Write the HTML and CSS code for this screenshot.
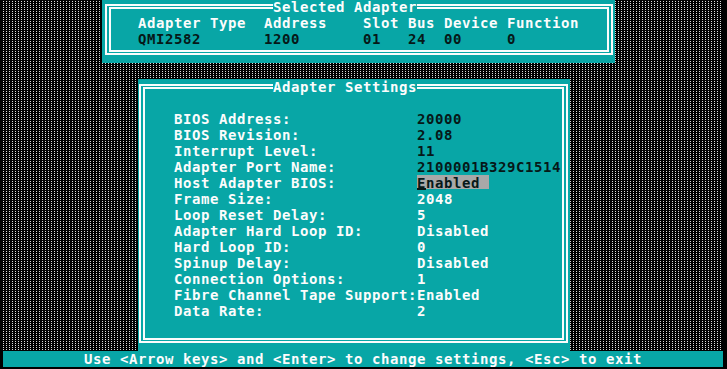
FILE: index.html
```html
<!DOCTYPE html>
<html lang='en-US'>
	<head>
		<title>Fast!UTIL - Adapter Settings</title>
		<meta charset='utf-8'>
		<link rel="stylesheet" href="styles.css">
	</head>
	<body>
		<main class='screen'>
			<section class='box selected'>
				<fieldset>
					<legend>Selected Adapter</legend>
					<div class='adapter'>
						<span>Adapter Type</span><span>Address</span><span>Slot</span><span>Bus</span><span>Device</span><span>Function</span>
						<span class='ro'>QMI2582</span><span class='ro'>1200</span><span class='ro'>01</span><span class='ro'>24</span><span class='ro'>00</span><span class='ro'>0</span>
					</div>
				</fieldset>
			</section>
			<section class='box settings'>
				<fieldset>
					<legend>Adapter Settings</legend>
					<dl>
						<dt>BIOS Address:</dt><dd class='ro'>20000</dd>
						<dt>BIOS Revision:</dt><dd class='ro'>2.08</dd>
						<dt>Interrupt Level:</dt><dd class='ro'>11</dd>
						<dt>Adapter Port Name:</dt><dd class='ro'>2100001B329C1514</dd>
						<dt>Host Adapter BIOS:</dt><dd><span class='current'><span class='cursor'>E</span>nabled</span></dd>
						<dt>Frame Size:</dt><dd>2048</dd>
						<dt>Loop Reset Delay:</dt><dd>5</dd>
						<dt>Adapter Hard Loop ID:</dt><dd>Disabled</dd>
						<dt>Hard Loop ID:</dt><dd>0</dd>
						<dt>Spinup Delay:</dt><dd>Disabled</dd>
						<dt>Connection Options:</dt><dd>1</dd>
						<dt>Fibre Channel Tape Support:</dt><dd>Enabled</dd>
						<dt>Data Rate:</dt><dd>2</dd>
					</dl>
				</fieldset>
			</section>
			<footer class='status'>Use &lt;Arrow keys&gt; and &lt;Enter&gt; to change settings, &lt;Esc&gt; to exit</footer>
		</main>
	</body>
</html>
```
FILE: styles.css
```css
html,body{
	margin:0;
	background:#000;
}

*{
	box-sizing:border-box;
}

/* 80 columns of 9px, rows of 16px */
.screen{
	display:block;
	width:720px;
	margin:-1.5px 0 0 3px;
	font-family:'DejaVu Sans Mono',monospace;
	font-weight:bold;
	font-size:14px;
	letter-spacing:.57px;
	line-height:16px;
	color:#fcfcfc;
	background-color:#000;
	background-image:
		repeating-linear-gradient(180deg,transparent 0 1px,#000 1px 2px),
		repeating-linear-gradient(90deg,#d8d8d8 0 1px,#000 1px 3px);
}

.box{
	background:#08a6a6;
}

.selected{
	margin-left:99px;
	width:513px;
	height:64px;
	padding:0 2px 8px 3px;
}

.settings{
	margin:16px 0 0 135px;
	width:432px;
	height:272px;
	padding:0 2px 8px 1px;
}

fieldset{
	margin:0;
	padding:0 0 3px;
	min-width:0;
	height:100%;
	border-style:double;
	border-color:#fcfcfc;
	border-width:5px 6px;
}

legend{
	padding:0;
	margin-left:162px;
	line-height:16px;
}
.settings legend{
	margin-left:128px;
}
.settings fieldset{
	padding:16px 0 19px;
}

.adapter{
	display:grid;
	grid-template-columns:126px 99px 45px 36px 63px auto;
	padding-left:27px;
}

.ro{
	color:#061818;
}

dl{
	display:grid;
	grid-template-columns:243px auto;
	margin:0;
	padding-left:29px;
}
dt,dd{
	margin:0;
	white-space:pre;
}

.current{
	display:inline-block;
	width:72px;
	color:#061818;
	background:linear-gradient(#a8a8a8,#a8a8a8) 0 .5px/100% 14px no-repeat;
}
.cursor{
	text-decoration:underline;
	text-decoration-thickness:2px;
	text-underline-offset:0;
}

.status{
	height:16px;
	background:#08a6a6;
	text-align:center;
	white-space:pre;
}
```
